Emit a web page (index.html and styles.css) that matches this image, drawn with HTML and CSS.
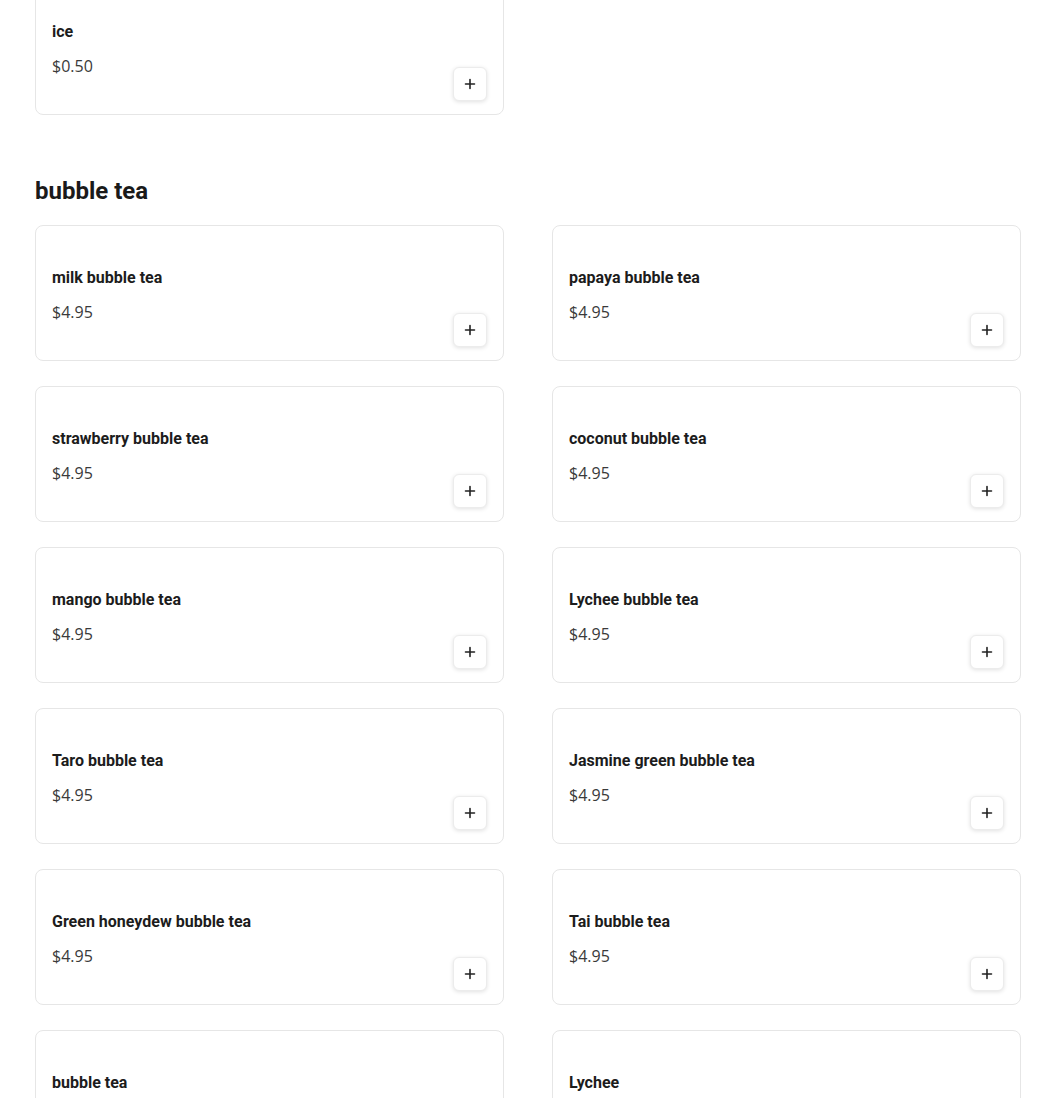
FILE: index.html
```html
<!DOCTYPE html>
<html>
<head>
<meta charset="utf-8">
<link rel="stylesheet" href="styles.css">
</head>
<body>
<div class="menu">
  <section class="section section-first">
    <div class="grid">
      <div class="card">
        <div class="info"><div class="name">ice</div><div class="price">$0.50</div></div>
        <button class="add"><svg viewBox="0 0 12 12" width="12" height="12"><path d="M6 1.5v9M1.5 6h9" stroke="#222" stroke-width="1.6" stroke-linecap="round"/></svg></button>
      </div>
    </div>
  </section>
  <section class="section">
    <h2 class="title">bubble tea</h2>
    <div class="grid">
      <div class="card"><div class="info"><div class="name">milk bubble tea</div><div class="price">$4.95</div></div><button class="add"><svg viewBox="0 0 12 12" width="12" height="12"><path d="M6 1.5v9M1.5 6h9" stroke="#222" stroke-width="1.6" stroke-linecap="round"/></svg></button></div>
      <div class="card"><div class="info"><div class="name">papaya bubble tea</div><div class="price">$4.95</div></div><button class="add"><svg viewBox="0 0 12 12" width="12" height="12"><path d="M6 1.5v9M1.5 6h9" stroke="#222" stroke-width="1.6" stroke-linecap="round"/></svg></button></div>
      <div class="card"><div class="info"><div class="name">strawberry bubble tea</div><div class="price">$4.95</div></div><button class="add"><svg viewBox="0 0 12 12" width="12" height="12"><path d="M6 1.5v9M1.5 6h9" stroke="#222" stroke-width="1.6" stroke-linecap="round"/></svg></button></div>
      <div class="card"><div class="info"><div class="name">coconut bubble tea</div><div class="price">$4.95</div></div><button class="add"><svg viewBox="0 0 12 12" width="12" height="12"><path d="M6 1.5v9M1.5 6h9" stroke="#222" stroke-width="1.6" stroke-linecap="round"/></svg></button></div>
      <div class="card"><div class="info"><div class="name">mango bubble tea</div><div class="price">$4.95</div></div><button class="add"><svg viewBox="0 0 12 12" width="12" height="12"><path d="M6 1.5v9M1.5 6h9" stroke="#222" stroke-width="1.6" stroke-linecap="round"/></svg></button></div>
      <div class="card"><div class="info"><div class="name">Lychee bubble tea</div><div class="price">$4.95</div></div><button class="add"><svg viewBox="0 0 12 12" width="12" height="12"><path d="M6 1.5v9M1.5 6h9" stroke="#222" stroke-width="1.6" stroke-linecap="round"/></svg></button></div>
      <div class="card"><div class="info"><div class="name">Taro bubble tea</div><div class="price">$4.95</div></div><button class="add"><svg viewBox="0 0 12 12" width="12" height="12"><path d="M6 1.5v9M1.5 6h9" stroke="#222" stroke-width="1.6" stroke-linecap="round"/></svg></button></div>
      <div class="card"><div class="info"><div class="name">Jasmine green bubble tea</div><div class="price">$4.95</div></div><button class="add"><svg viewBox="0 0 12 12" width="12" height="12"><path d="M6 1.5v9M1.5 6h9" stroke="#222" stroke-width="1.6" stroke-linecap="round"/></svg></button></div>
      <div class="card"><div class="info"><div class="name">Green honeydew bubble tea</div><div class="price">$4.95</div></div><button class="add"><svg viewBox="0 0 12 12" width="12" height="12"><path d="M6 1.5v9M1.5 6h9" stroke="#222" stroke-width="1.6" stroke-linecap="round"/></svg></button></div>
      <div class="card"><div class="info"><div class="name">Tai bubble tea</div><div class="price">$4.95</div></div><button class="add"><svg viewBox="0 0 12 12" width="12" height="12"><path d="M6 1.5v9M1.5 6h9" stroke="#222" stroke-width="1.6" stroke-linecap="round"/></svg></button></div>
      <div class="card"><div class="info"><div class="name">bubble tea</div><div class="price">$4.95</div></div><button class="add"><svg viewBox="0 0 12 12" width="12" height="12"><path d="M6 1.5v9M1.5 6h9" stroke="#222" stroke-width="1.6" stroke-linecap="round"/></svg></button></div>
      <div class="card"><div class="info"><div class="name">Lychee</div><div class="price">$4.95</div></div><button class="add"><svg viewBox="0 0 12 12" width="12" height="12"><path d="M6 1.5v9M1.5 6h9" stroke="#222" stroke-width="1.6" stroke-linecap="round"/></svg></button></div>
    </div>
  </section>
</div>
</body>
</html>
```

FILE: styles.css
```css
html, body {
  margin: 0;
  padding: 0;
  background: #ffffff;
}
body {
  font-family: Roboto, "Liberation Sans", sans-serif;
  color: #1a1a1a;
}
.menu {
  padding: 0 29px 0 35px;
  margin-top: -21px;
}
.section-first {
  margin-bottom: 60px;
}
.title {
  margin: 0 0 18px 0;
  font-size: 24px;
  line-height: 32px;
  font-weight: 700;
  color: #1a1a1a;
}
.grid {
  display: grid;
  grid-template-columns: 469px 469px;
  column-gap: 48px;
  row-gap: 25px;
}
.card {
  box-sizing: border-box;
  height: 136px;
  border: 1px solid #e6e6e6;
  border-radius: 8px;
  padding: 0 16px 13px 16px;
  display: flex;
  justify-content: space-between;
  align-items: flex-end;
  background: #fff;
}
.info {
  align-self: flex-start;
  padding-top: 41px;
}
.name {
  font-size: 16px;
  line-height: 22px;
  font-weight: 700;
  color: #1c1c1c;
}
.price {
  margin-top: 12px;
  font-family: "Open Sans", "Liberation Sans", sans-serif;
  font-size: 16px;
  line-height: 22px;
  color: #3a3a3a;
}
.add {
  width: 34px;
  height: 34px;
  padding: 0;
  border: 1px solid #ececec;
  border-radius: 6px;
  background: #fff;
  box-shadow: 0 1px 4px rgba(0, 0, 0, 0.12);
  display: flex;
  align-items: center;
  justify-content: center;
  cursor: pointer;
}
.add svg {
  display: block;
}
```
